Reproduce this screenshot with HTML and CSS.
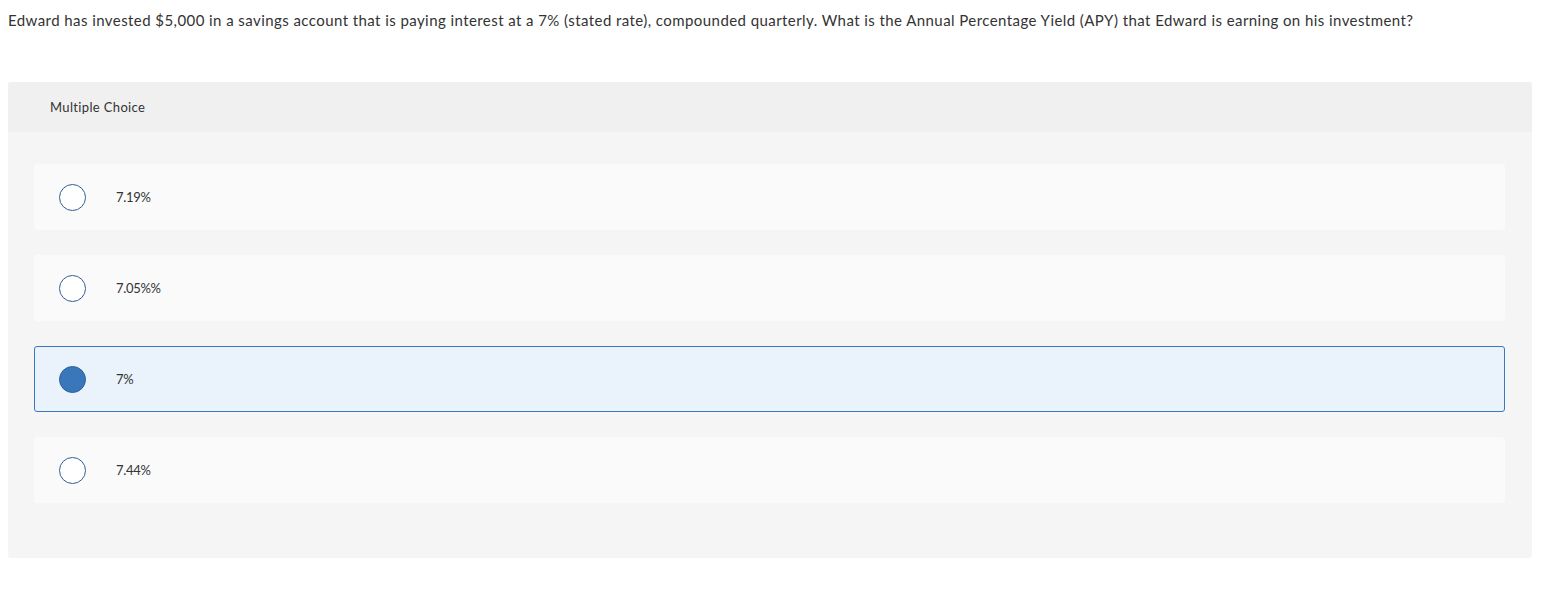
FILE: index.html
```html
<!DOCTYPE html>
<html lang="en">

<head>
    <meta charset="UTF-8">
    <title>Multiple Choice</title>
    <link rel="stylesheet" href="styles.css">
</head>

<body>
    <p class="question">Edward has invested $5,000 in a savings account that is paying interest at a 7% (stated rate), compounded quarterly. What is the Annual Percentage Yield (APY) that Edward is earning on his investment?</p>

    <div class="panel">
        <div class="panel-head">Multiple Choice</div>

        <div class="choices">
            <label class="choice">
                <span class="radio"></span>
                <span class="answer">7.19%</span>
            </label>

            <label class="choice">
                <span class="radio"></span>
                <span class="answer">7.05%%</span>
            </label>

            <label class="choice selected">
                <span class="radio"></span>
                <span class="answer">7%</span>
            </label>

            <label class="choice">
                <span class="radio"></span>
                <span class="answer">7.44%</span>
            </label>
        </div>
    </div>
</body>

</html>
```

FILE: styles.css
```css
body {
    margin: 0;
    padding: 0 34px 0 8px;
    font-family: Lato, "Open Sans", sans-serif;
    color: #333;
    background: #fff;
}

.question {
    margin: 0;
    padding-top: 10px;
    font-size: 15px;
    line-height: 20px;
    letter-spacing: 0.43px;
    height: 72px;
}

.panel {
    background: #f5f5f5;
    border-radius: 3px;
    overflow: hidden;
    padding-bottom: 55px;
}

.panel-head {
    background: #f0f0f0;
    height: 50px;
    line-height: 50px;
    padding-left: 42px;
    font-size: 13px;
    letter-spacing: 0.35px;
}

.choices {
    display: flex;
    flex-direction: column;
    gap: 25px;
    padding: 32px 27px 0 26px;
}

.choice {
    display: flex;
    align-items: center;
    height: 66px;
    box-sizing: border-box;
    background: #fafafa;
    border: 1px solid #fafafa;
    border-radius: 3px;
    padding-left: 24px;
    font-size: 13px;
    letter-spacing: -0.3px;
}

.choice.selected {
    background: #eaf2fb;
    border-color: #3a78c0;
}

.radio {
    width: 25px;
    height: 25px;
    border: 1.5px solid #2f5f95;
    border-radius: 50%;
    background: #fff;
    margin-right: 30px;
}

.selected .radio {
    background: #3a76ba;
    border-color: #2d5f98;
}
```
